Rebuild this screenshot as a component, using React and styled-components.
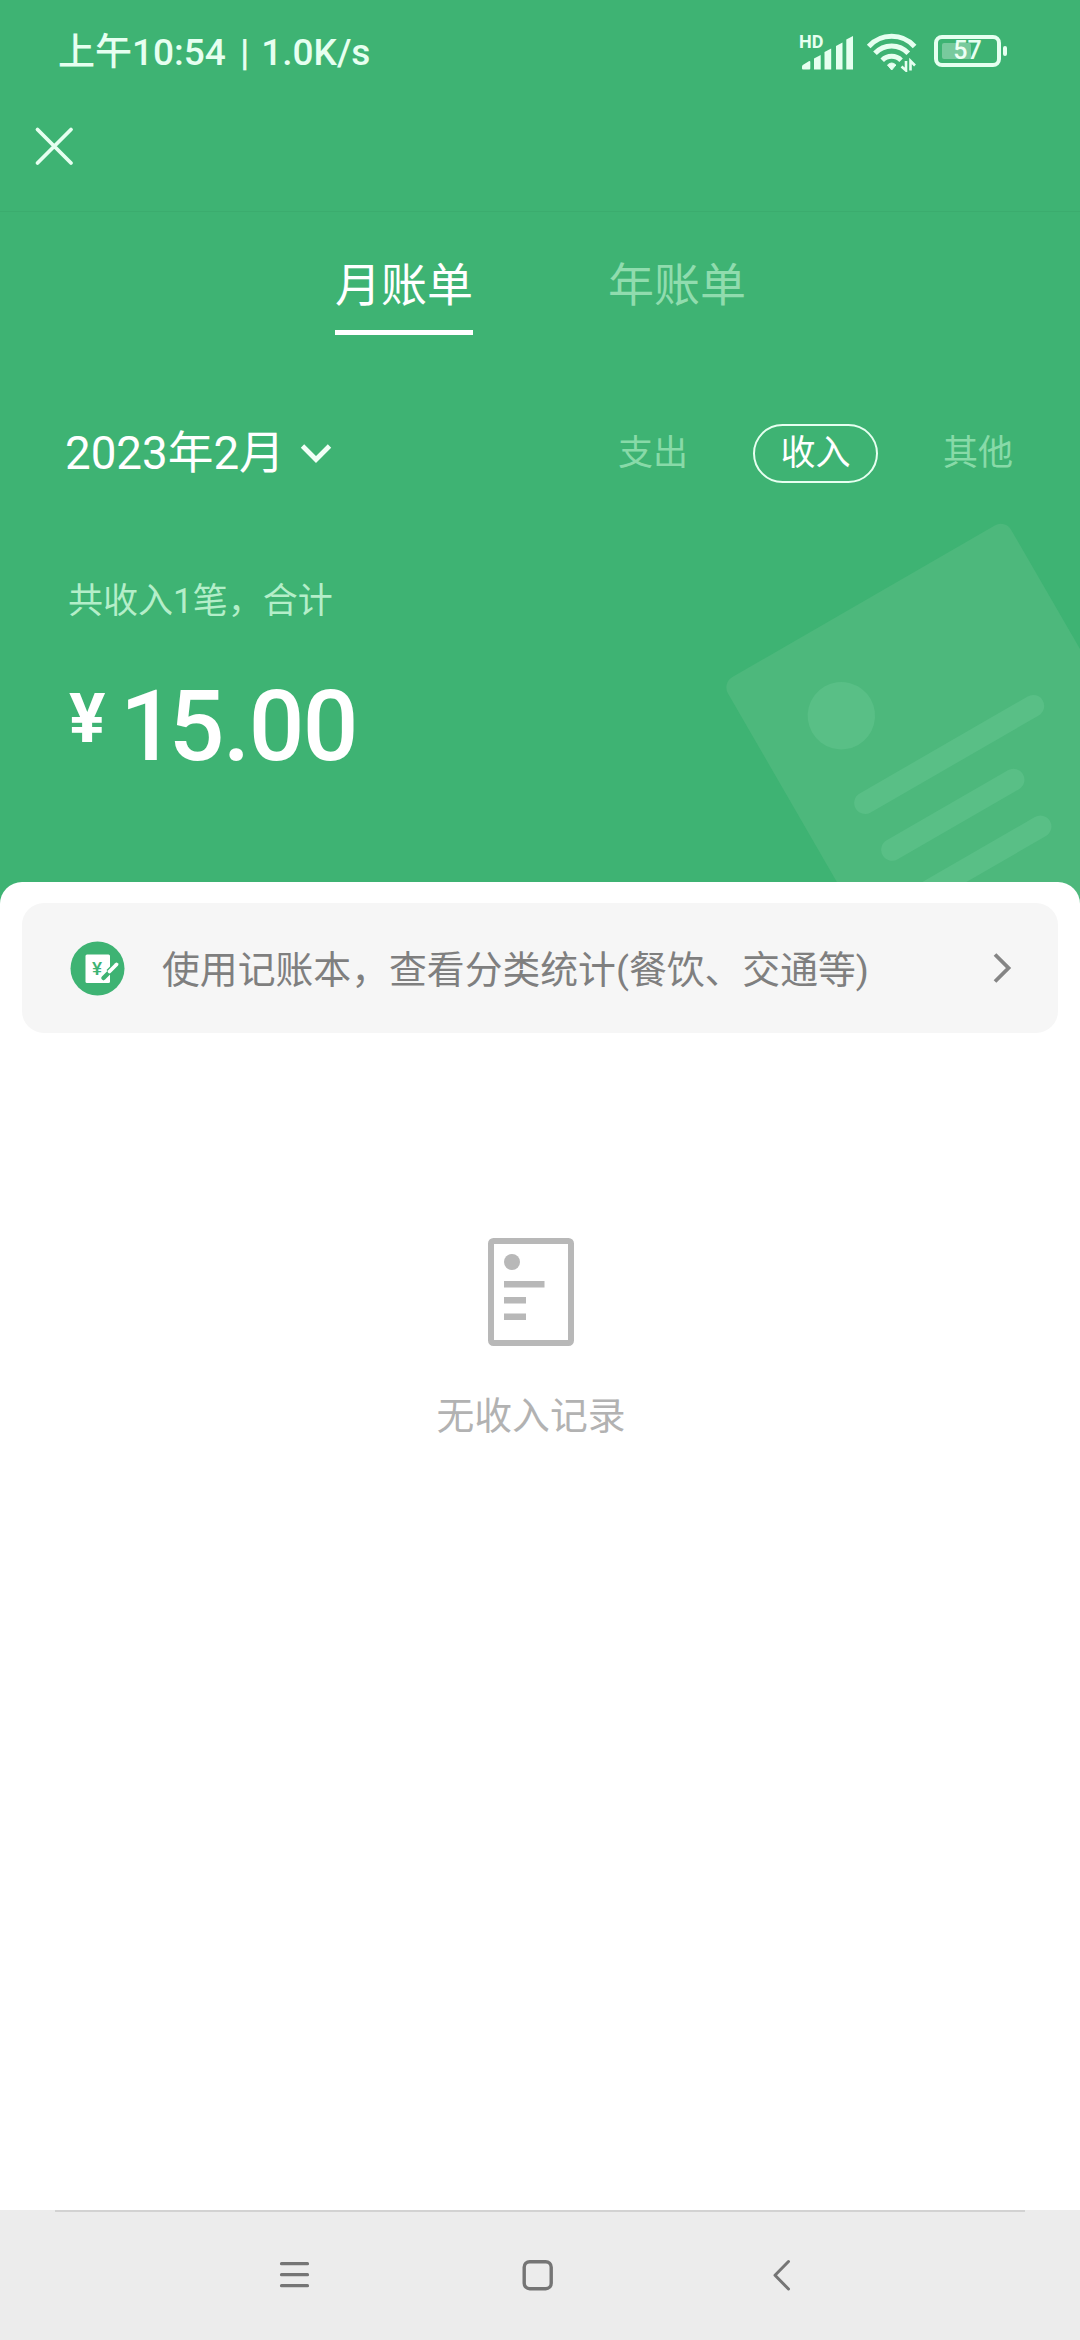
import React from 'react';
import styled, { createGlobalStyle } from 'styled-components';

const GlobalStyle = createGlobalStyle`
  * {
    box-sizing: border-box;
  }
  body {
    margin: 0;
    background-color: #fff;
    font-family: Roboto, 'Noto Sans CJK SC', sans-serif;
  }
  svg {
    display: block;
    flex-shrink: 0;
  }
`;

const BillPageStyles = styled.div`
  display: flex;
  flex-direction: column;
  width: 1080px;
  height: 2340px;
  overflow: hidden;
`;

const Hero = styled.header`
  position: relative;
  height: 904px;
  flex-shrink: 0;
  overflow: hidden;
  color: #fff;
  background-color: #3eb373;
`;

const ReceiptArt = styled.svg`
  position: absolute;
  right: 0;
  bottom: 0;
`;

const StatusBar = styled.div`
  display: flex;
  align-items: center;
  justify-content: space-between;
  height: 104px;
  padding: 0 79px 0 58px;
  color: #e6fff0;
`;

const Clock = styled.div`
  display: flex;
  padding-top: 2px;
  font-size: 37px;
  font-weight: 500;
  line-height: 40px;
  white-space: pre;
`;

const Divider = styled.span`
  margin: 0 12px 0 14px;
  font-weight: 700;
`;

const StatusIcons = styled.div`
  display: flex;
  align-items: center;
`;

const Signal = styled.div`
  position: relative;
  width: 55px;
  height: 38px;
  margin-right: 11px;
  span {
    position: absolute;
    left: -1px;
    top: 0;
    font-size: 18px;
    font-weight: 700;
    line-height: 18px;
  }
`;

const Battery = styled.div`
  position: relative;
  display: flex;
  align-items: center;
  justify-content: center;
  width: 67px;
  height: 32px;
  margin: 0 0 2px 16px;
  border: 4px solid #e6fff0;
  border-radius: 8px;
  font-size: 25px;
  font-weight: 500;
  line-height: 24px;
  &::before {
    content: '';
    position: absolute;
    left: 4px;
    top: 4px;
    width: 29px;
    height: 16px;
    border-radius: 2px;
    background-color: rgba(255, 255, 255, 0.3);
  }
  &::after {
    content: '';
    position: absolute;
    right: -10px;
    top: 7px;
    width: 4px;
    height: 10px;
    border-radius: 2px;
    background-color: #e6fff0;
  }
`;

const TitleBar = styled.div`
  display: flex;
  align-items: center;
  height: 108px;
  padding: 0 34px 22px;
  border-bottom: 1px solid #3bac6e;
`;

const Tabs = styled.nav`
  display: flex;
  justify-content: center;
  gap: 135px;
  padding: 43px 0 0 1px;
`;

const Tab = styled.div`
  height: 80px;
  font-size: 46px;
  line-height: 60px;
  color: ${(props) => (props.$active ? '#fff' : '#90dcae')};
  border-bottom: 5px solid ${(props) => (props.$active ? '#fff' : 'transparent')};
`;

const FilterRow = styled.div`
  display: flex;
  align-items: center;
  justify-content: space-between;
  margin-top: 89px;
  padding: 0 67px 0 65px;
`;

const Month = styled.div`
  display: flex;
  align-items: center;
  gap: 15px;
  font-size: 45.7px;
  line-height: 59px;
`;

const Filters = styled.div`
  display: flex;
  align-items: center;
  gap: 65px;
`;

const Filter = styled.div`
  font-size: 35px;
  line-height: 55px;
  color: #88daa8;
`;

const ActiveFilter = styled(Filter)`
  padding: 0 25.5px;
  color: #fff;
  border: 2px solid #e6fff0;
  border-radius: 30px;
`;

const Summary = styled.div`
  margin-top: 94px;
  padding-left: 68px;
  font-size: 35px;
  line-height: 50px;
  color: #b4eec9;
`;

const Amount = styled.div`
  display: flex;
  align-items: flex-start;
  margin-top: 50px;
  padding-left: 69px;
  font-size: 98px;
  font-weight: 500;
  line-height: 100px;
  letter-spacing: -1.5px;
`;

const Yen = styled.span`
  width: 51px;
  font-size: 68px;
  font-weight: 700;
  line-height: 84px;
`;

// the leading 1 sits close to the next digit
const LeadDigit = styled.span`
  letter-spacing: -7px;
`;

const Sheet = styled.main`
  position: relative;
  flex: 1;
  margin-top: -22px;
  padding: 21px 22px 0;
  border-radius: 22px 22px 0 0;
  background-color: #fff;
`;

const Banner = styled.div`
  display: flex;
  align-items: center;
  height: 130px;
  padding: 0 46px 0 48px;
  border-radius: 22px;
  background-color: #f6f6f6;
  p {
    flex: 1;
    margin: 0 0 0 37px;
    padding-top: 4px;
    font-size: 37.85px;
    line-height: 50px;
    color: #7f7f7f;
  }
`;

const Empty = styled.div`
  display: flex;
  flex-direction: column;
  align-items: center;
  margin-top: 205px;
  padding-right: 18px;
  p {
    margin: 45px 0 0;
    font-size: 37.8px;
    line-height: 50px;
    color: #b2b2b2;
  }
`;

const NavBar = styled.footer`
  display: flex;
  flex-direction: column;
  align-items: center;
  height: 130px;
  flex-shrink: 0;
  background-color: #ececec;
  &::before {
    content: '';
    width: 970px;
    height: 2px;
    background-color: #d2d2d2;
  }
`;

const NavButtons = styled.div`
  display: flex;
  width: 100%;
  padding: 46px 0 0 278px;
  gap: 210px;
`;

const SignalIcon = () => (
  <svg width="55" height="38" viewBox="0 0 55 38" fill="#e6fff0">
    <path d="M2 35.5v-2q0-1 .8-1.6l6-3.6q1.5-.6 1.5.8v6.4q0 1-1 1H3q-1 0-1-1z" />
    <path d="M14 25.5l6.7-3.5v14.5H14z" />
    <path d="M24.5 19l6.700-3.5v21h-6.700z" />
    <path d="M36 13l6.5-3.5v27H36z" />
    <path d="M46.3 6.5L53 3v33.5h-6.7z" />
  </svg>
);

const WifiIcon = () => (
  <svg width="52" height="40" viewBox="0 0 52 40" fill="none" stroke="#e6fff0" strokeWidth="5">
    <path d="M2.7 14.5A31 31 0 0 1 48.6 14.5" />
    <path d="M9 21.3A22.5 22.5 0 0 1 42.3 21.3" />
    <path d="M16.2 28.2A13.5 13.5 0 0 1 35.1 28.2" />
    <path d="M21.5 33q4.2-4 8.4 0l-4.2 5z" fill="#e6fff0" stroke="#e6fff0" strokeWidth="1" />
    <path d="M40 29v9.500l-4.500-4M44.500 38.500V29l4.500 4.500" strokeWidth="2.6" />
  </svg>
);

const LedgerIcon = () => (
  <svg width="55" height="55" viewBox="0 0 55 55">
    <circle cx="27.5" cy="27.5" r="27" fill="#3eb373" />
    <rect x="15.5" y="13.5" width="24.5" height="28.5" rx="1.5" fill="#fff" />
    <text x="27" y="34" textAnchor="middle" fontSize="19" fontWeight="500" fill="#3eb373">
      ¥
    </text>
    <path d="M39 31.500L44.500 26" stroke="#3eb373" strokeWidth="7" />
    <path d="M33.500 37L40 30.500" stroke="#3eb373" strokeWidth="4.500" strokeLinecap="round" />
    <path d="M39.500 30.500L46.500 23.500" stroke="#fff" strokeWidth="3.800" strokeLinecap="round" />
  </svg>
);

const filters = ['支出', '收入', '其他'];

export default function App() {
  return (
    <>
      <GlobalStyle />
      <BillPageStyles>
        <Hero>
          {/* tilted receipt in the corner */}
          <ReceiptArt width="380" height="404" viewBox="700 500 380 404">
            <g transform="translate(722 683) rotate(-30)">
              <rect width="327" height="420" rx="12" fill="#4db87c" />
              <circle cx="87" cy="88" r="33.7" fill="#59bf86" />
              <path
                d="M64 175.5H258M64 229.5H204M64 283.5H204"
                stroke="#59bf86"
                strokeWidth="22"
                strokeLinecap="round"
              />
            </g>
          </ReceiptArt>
          <StatusBar>
            <Clock>
              上午10:54
              <Divider>|</Divider>
              1.0K/s
            </Clock>
            <StatusIcons>
              <Signal>
                <span>HD</span>
                <SignalIcon />
              </Signal>
              <WifiIcon />
              <Battery>57</Battery>
            </StatusIcons>
          </StatusBar>
          <TitleBar>
            <svg width="41" height="41" viewBox="0 0 41 41" stroke="#e6fff0" strokeWidth="3.8" strokeLinecap="round">
              <path d="M3.5 3.5L37 37M37 3.5L3.5 37" />
            </svg>
          </TitleBar>
          <Tabs>
            <Tab $active>月账单</Tab>
            <Tab>年账单</Tab>
          </Tabs>
          <FilterRow>
            <Month>
              2023年2月
              <svg width="34" height="24" viewBox="0 0 34 24" fill="none" stroke="#f2fff7" strokeWidth="4.8">
                <path d="M2.5 4L16 17.5L29.5 4" />
              </svg>
            </Month>
            <Filters>
              {filters.map((name) =>
                name === '收入' ? (
                  <ActiveFilter key={name}>{name}</ActiveFilter>
                ) : (
                  <Filter key={name}>{name}</Filter>
                )
              )}
            </Filters>
          </FilterRow>
          <Summary>共收入1笔，合计</Summary>
          <Amount>
            <Yen>¥</Yen>
            <LeadDigit>1</LeadDigit>
            5.00
          </Amount>
        </Hero>
        <Sheet>
          <Banner>
            <LedgerIcon />
            <p>使用记账本，查看分类统计(餐饮、交通等)</p>
            <svg width="20" height="34" viewBox="0 0 20 34" fill="none" stroke="#858585" strokeWidth="3.8">
              <path d="M3 3.5L16.5 17L3 30.5" />
            </svg>
          </Banner>
          <Empty>
            <svg width="86" height="108" viewBox="0 0 86 108" fill="#b8b8b8">
              <rect x="3" y="3" width="80" height="102" rx="2.5" fill="none" stroke="#b8b8b8" strokeWidth="6" />
              <circle cx="24" cy="24" r="8" />
              <path d="M16 43h40.5v6.5H16zM16 59h22v6.5H16zM16 75.5h22V82H16z" />
            </svg>
            <p>无收入记录</p>
          </Empty>
        </Sheet>
        <NavBar>
          <NavButtons>
            <svg width="34" height="34" viewBox="0 0 34 34" stroke="#757575" strokeWidth="3.2" strokeLinecap="round">
              <path d="M3.5 5.7H29.5M3.5 16.7H29.5M3.5 27.7H29.5" />
            </svg>
            <svg width="34" height="34" viewBox="0 0 34 34" fill="none" stroke="#757575" strokeWidth="3.4">
              <rect x="2.2" y="3.7" width="27" height="27" rx="5.5" />
            </svg>
            <svg width="34" height="34" viewBox="0 0 34 34" fill="none" stroke="#757575" strokeWidth="3" strokeLinecap="round" strokeLinejoin="round">
              <path d="M22.5 3.5L9 17.2L22.5 31" />
            </svg>
          </NavButtons>
        </NavBar>
      </BillPageStyles>
    </>
  );
}
